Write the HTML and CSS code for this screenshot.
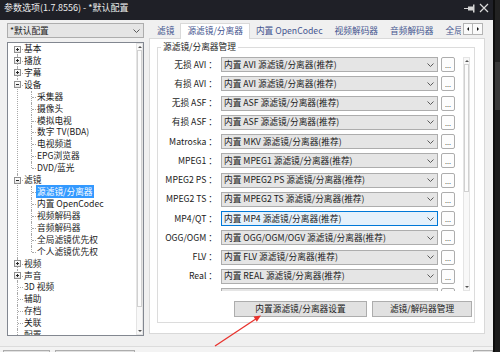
FILE: index.html
```html
<!DOCTYPE html>
<html lang="zh-CN">
<head>
    <meta charset="UTF-8">
    <title>参数选项</title>
    <link rel="stylesheet" href="styles.css">
</head>
<body>
    <div class="screen">
        <div class="window">
            <div class="titlebar">
                <span class="title">参数选项(1.7.8556) - *默认配置</span>
                <div class="title-btns">
                    <svg class="pin" width="12" height="9" viewBox="0 0 12 9"><path d="M0 4.5H4" stroke="#d4d4d4"/><rect x="4" y="2.5" width="5" height="4" fill="#d4d4d4"/><rect x="9" y="0.5" width="1.5" height="8" fill="#d4d4d4"/></svg>
                    <svg class="close" width="10" height="10" viewBox="0 0 10 10"><path d="M1 1L9 9M9 1L1 9" stroke="#dadada" stroke-width="1.2"/></svg>
                </div>
            </div>

            <div class="client">
                <div class="main">
                    <!-- left: profile + tree -->
                    <div class="sidebar">
                        <div class="combo profile">
                            <span class="value">*默认配置</span>
                            <svg class="chevron" width="7" height="4" viewBox="0 0 7 4"><path d="M0.5 0.5L3.5 3.5L6.5 0.5" fill="none" stroke="#5a5a5a"/></svg>
                        </div>
                        <div class="tree">
                            <ul class="tree-list">
                                <li><div class="node"><i class="toggle plus"></i><span class="text">基本</span></div></li>
                                <li><div class="node"><i class="toggle plus"></i><span class="text">播放</span></div></li>
                                <li><div class="node"><i class="toggle plus"></i><span class="text">字幕</span></div></li>
                                <li>
                                    <div class="node"><i class="toggle"></i><span class="text">设备</span></div>
                                    <ul class="sub">
                                        <li><div class="node"><span class="text">采集器</span></div></li>
                                        <li><div class="node"><span class="text">摄像头</span></div></li>
                                        <li><div class="node"><span class="text">模拟电视</span></div></li>
                                        <li><div class="node"><span class="text">数字 TV(BDA)</span></div></li>
                                        <li><div class="node"><span class="text">电视频道</span></div></li>
                                        <li><div class="node"><span class="text">EPG浏览器</span></div></li>
                                        <li><div class="node"><span class="text">DVD/蓝光</span></div></li>
                                    </ul>
                                </li>
                                <li>
                                    <div class="node"><i class="toggle"></i><span class="text">滤镜</span></div>
                                    <ul class="sub">
                                        <li><div class="node selected"><span class="text">源滤镜/分离器</span></div></li>
                                        <li><div class="node"><span class="text">内置 OpenCodec</span></div></li>
                                        <li><div class="node"><span class="text">视频解码器</span></div></li>
                                        <li><div class="node"><span class="text">音频解码器</span></div></li>
                                        <li><div class="node"><span class="text">全局滤镜优先权</span></div></li>
                                        <li><div class="node"><span class="text">个人滤镜优先权</span></div></li>
                                    </ul>
                                </li>
                                <li><div class="node"><i class="toggle plus"></i><span class="text">视频</span></div></li>
                                <li><div class="node"><i class="toggle plus"></i><span class="text">声音</span></div></li>
                                <li><div class="node"><span class="text">3D 视频</span></div></li>
                                <li><div class="node"><span class="text">辅助</span></div></li>
                                <li><div class="node"><span class="text">存档</span></div></li>
                                <li><div class="node"><span class="text">关联</span></div></li>
                                <li><div class="node"><span class="text">配置</span></div></li>
                            </ul>
                            <div class="vscroll">
                                <span class="arrow up"></span>
                                <span class="thumb thumb-tree"></span>
                                <span class="track"></span>
                                <span class="arrow down"></span>
                            </div>
                        </div>
                    </div>

                    <!-- right: tabs -->
                    <div class="tabs">
                        <div class="tab-strip">
                            <div class="tab-list">
                                <span class="tab">滤镜</span>
                                <span class="tab active">源滤镜/分离器</span>
                                <span class="tab">内置 OpenCodec</span>
                                <span class="tab">视频解码器</span>
                                <span class="tab">音频解码器</span>
                                <span class="tab">全局滤镜优先权</span>
                            </div>
                            <div class="tab-arrows">
                                <span class="left"></span>
                                <span class="right"></span>
                            </div>
                        </div>

                        <div class="tab-page">
                            <fieldset class="group">
                                <legend>源滤镜/分离器管理</legend>
                                <div class="scroller">
                                    <div class="rows">
                                        <div class="row">
                                            <label>无损 AVI ：</label>
                                            <div class="combo"><span class="value">内置 AVI 源滤镜/分离器(推荐)</span><svg class="chevron" width="7" height="4" viewBox="0 0 7 4"><path d="M0.5 0.5L3.5 3.5L6.5 0.5" fill="none" stroke="#5a5a5a"/></svg></div>
                                            <span class="more">...</span>
                                        </div>
                                        <div class="row">
                                            <label>有损 AVI ：</label>
                                            <div class="combo"><span class="value">内置 AVI 源滤镜/分离器(推荐)</span><svg class="chevron" width="7" height="4" viewBox="0 0 7 4"><path d="M0.5 0.5L3.5 3.5L6.5 0.5" fill="none" stroke="#5a5a5a"/></svg></div>
                                            <span class="more">...</span>
                                        </div>
                                        <div class="row">
                                            <label>无损 ASF ：</label>
                                            <div class="combo"><span class="value">内置 ASF 源滤镜/分离器(推荐)</span><svg class="chevron" width="7" height="4" viewBox="0 0 7 4"><path d="M0.5 0.5L3.5 3.5L6.5 0.5" fill="none" stroke="#5a5a5a"/></svg></div>
                                            <span class="more">...</span>
                                        </div>
                                        <div class="row">
                                            <label>有损 ASF ：</label>
                                            <div class="combo"><span class="value">内置 ASF 源滤镜/分离器(推荐)</span><svg class="chevron" width="7" height="4" viewBox="0 0 7 4"><path d="M0.5 0.5L3.5 3.5L6.5 0.5" fill="none" stroke="#5a5a5a"/></svg></div>
                                            <span class="more">...</span>
                                        </div>
                                        <div class="row">
                                            <label>Matroska ：</label>
                                            <div class="combo"><span class="value">内置 MKV 源滤镜/分离器(推荐)</span><svg class="chevron" width="7" height="4" viewBox="0 0 7 4"><path d="M0.5 0.5L3.5 3.5L6.5 0.5" fill="none" stroke="#5a5a5a"/></svg></div>
                                            <span class="more">...</span>
                                        </div>
                                        <div class="row">
                                            <label>MPEG1 ：</label>
                                            <div class="combo"><span class="value">内置 MPEG1 源滤镜/分离器(推荐)</span><svg class="chevron" width="7" height="4" viewBox="0 0 7 4"><path d="M0.5 0.5L3.5 3.5L6.5 0.5" fill="none" stroke="#5a5a5a"/></svg></div>
                                            <span class="more">...</span>
                                        </div>
                                        <div class="row">
                                            <label>MPEG2 PS ：</label>
                                            <div class="combo"><span class="value">内置 MPEG2 PS 源滤镜/分离器(推荐)</span><svg class="chevron" width="7" height="4" viewBox="0 0 7 4"><path d="M0.5 0.5L3.5 3.5L6.5 0.5" fill="none" stroke="#5a5a5a"/></svg></div>
                                            <span class="more">...</span>
                                        </div>
                                        <div class="row">
                                            <label>MPEG2 TS ：</label>
                                            <div class="combo"><span class="value">内置 MPEG2 TS 源滤镜/分离器(推荐)</span><svg class="chevron" width="7" height="4" viewBox="0 0 7 4"><path d="M0.5 0.5L3.5 3.5L6.5 0.5" fill="none" stroke="#5a5a5a"/></svg></div>
                                            <span class="more">...</span>
                                        </div>
                                        <div class="row">
                                            <label>MP4/QT ：</label>
                                            <div class="combo focus"><span class="value">内置 MP4 源滤镜/分离器(推荐)</span><svg class="chevron" width="7" height="4" viewBox="0 0 7 4"><path d="M0.5 0.5L3.5 3.5L6.5 0.5" fill="none" stroke="#5a5a5a"/></svg></div>
                                            <span class="more">...</span>
                                        </div>
                                        <div class="row">
                                            <label>OGG/OGM ：</label>
                                            <div class="combo"><span class="value">内置 OGG/OGM/OGV 源滤镜/分离器(推荐)</span><svg class="chevron" width="7" height="4" viewBox="0 0 7 4"><path d="M0.5 0.5L3.5 3.5L6.5 0.5" fill="none" stroke="#5a5a5a"/></svg></div>
                                            <span class="more">...</span>
                                        </div>
                                        <div class="row">
                                            <label>FLV ：</label>
                                            <div class="combo"><span class="value">内置 FLV 源滤镜/分离器(推荐)</span><svg class="chevron" width="7" height="4" viewBox="0 0 7 4"><path d="M0.5 0.5L3.5 3.5L6.5 0.5" fill="none" stroke="#5a5a5a"/></svg></div>
                                            <span class="more">...</span>
                                        </div>
                                        <div class="row">
                                            <label>Real ：</label>
                                            <div class="combo"><span class="value">内置 REAL 源滤镜/分离器(推荐)</span><svg class="chevron" width="7" height="4" viewBox="0 0 7 4"><path d="M0.5 0.5L3.5 3.5L6.5 0.5" fill="none" stroke="#5a5a5a"/></svg></div>
                                            <span class="more">...</span>
                                        </div>
                                        <div class="row">
                                            <label></label>
                                            <div class="combo"><span class="value"></span></div>
                                            <span class="more">...</span>
                                        </div>
                                    </div>
                                    <div class="vscroll">
                                        <span class="arrow up"></span>
                                        <span class="thumb thumb-page"></span>
                                        <span class="track"></span>
                                        <span class="arrow down"></span>
                                    </div>
                                </div>
                                <div class="actions">
                                    <button class="btn btn-setup">内置源滤镜/分离器设置</button>
                                    <button class="btn btn-manage">滤镜/解码器管理</button>
                                </div>
                            </fieldset>
                        </div>
                    </div>
                </div>

                <div class="footer">
                    <button class="btn"></button>
                    <button class="btn wide"></button>
                    <button class="btn end"></button>
                </div>
            </div>
        </div>
        <div class="edge"></div>
    </div>

    <svg class="annotation" width="500" height="352" viewBox="0 0 500 352">
        <path d="M215 346L256.5 318.5" stroke="#e8322d" stroke-width="1.3"/>
        <polygon points="261,315.5 256.8,321.8 253.5,316.6" fill="#e8322d"/>
    </svg>
</body>
</html>
```

FILE: styles.css
```css
* {
    margin: 0;
    padding: 0;
    box-sizing: border-box;
}

body {
    width: 500px;
    height: 352px;
    overflow: hidden;
    position: relative;
    background: #1d1d1f;
    font-family: "Noto Sans CJK SC", "Noto Sans", sans-serif;
    font-size: 8.7px;
    line-height: 12px;
    color: #1a1a1a;
}

.screen {
    display: flex;
    height: 352px;
}

.window {
    width: 493px;
    height: 352px;
    display: flex;
    flex-direction: column;
    background: #f0f0f0;
    overflow: hidden;
}

.edge {
    flex: 1;
    border-left: 2px solid #0e0e0e;
    background: linear-gradient(#222 0, #222 62px, #3a3a3a 62px, #3a3a3a 110px, #1c1c1c 110px);
}

/* title bar */
.titlebar {
    height: 20px;
    flex: none;
    display: flex;
    align-items: center;
    padding: 0 4px 4px 4px;
    background: #1f2027;
    color: #eee;
    font-size: 9px;
}

.titlebar .title {
    flex: 1;
    white-space: nowrap;
}

.title-btns {
    display: flex;
    align-items: center;
    gap: 3px;
}

.client {
    flex: 1;
    min-height: 0;
    display: flex;
    flex-direction: column;
}

.main {
    height: 326px;
    flex: none;
    display: flex;
    padding: 3px 0 0 7px;
}

/* left column */
.sidebar {
    width: 137px;
    display: flex;
    flex-direction: column;
    gap: 4px;
}

.combo {
    height: 15px;
    display: flex;
    align-items: center;
    padding: 0 3px 0 2px;
    border: 1px solid #adadad;
    background: #e5e5e5;
    white-space: nowrap;
    overflow: hidden;
}

.combo .value {
    flex: 1;
    overflow: hidden;
}

.combo.focus {
    border-color: #0078d7;
    background: #e5f1fb;
}

.chevron {
    flex: none;
}

.tree {
    height: 294px;
    display: flex;
    border: 1px solid #828790;
    background: #fff;
    overflow: hidden;
}

.tree-list,
.tree-list ul {
    list-style: none;
}

.tree-list {
    flex: 1;
    overflow: hidden;
}

.tree-list li {
    position: relative;
}

.tree-list > li::before {
    content: "";
    position: absolute;
    left: 9px;
    top: 0;
    bottom: 0;
    border-left: 1px dotted #a8a8a8;
}

.tree-list > li:first-child::before {
    top: 6px;
}

.sub > li::before {
    content: "";
    position: absolute;
    left: 23px;
    top: 0;
    bottom: 0;
    border-left: 1px dotted #a8a8a8;
}

.sub > li:last-child::before {
    bottom: auto;
    height: 6px;
}

.node {
    position: relative;
    height: 11.93px;
    line-height: 11.93px;
    padding-left: 15px;
    white-space: nowrap;
}

.node::before {
    content: "";
    position: absolute;
    left: 10px;
    top: 6px;
    width: 5px;
    border-top: 1px dotted #a8a8a8;
}

.sub .node {
    padding-left: 28px;
}

.sub .node::before {
    left: 24px;
    width: 4px;
}

.node .text {
    padding: 0 1px;
}

.node.selected .text {
    background: #3399ff;
    color: #fff;
}

.toggle {
    position: absolute;
    left: 6px;
    top: 2.5px;
    width: 7px;
    height: 7px;
    z-index: 1;
    border: 1px solid #919191;
    background: linear-gradient(#fff, #e4e4e4);
}

.toggle::before {
    content: "";
    position: absolute;
    left: 1px;
    top: 2px;
    width: 3px;
    height: 1px;
    background: #2a2a2a;
}

.toggle.plus::after {
    content: "";
    position: absolute;
    left: 2px;
    top: 1px;
    width: 1px;
    height: 3px;
    background: #2a2a2a;
}

/* scrollbars */
.vscroll {
    flex: none;
    width: 7px;
    display: flex;
    flex-direction: column;
    background: #f8f8f8;
    border: 1px solid #e4e4e4;
}

.vscroll .arrow {
    height: 6px;
    flex: none;
    display: flex;
    align-items: center;
    justify-content: center;
}

.vscroll .arrow::before {
    content: "";
    border-left: 2px solid transparent;
    border-right: 2px solid transparent;
}

.vscroll .arrow.up::before {
    border-bottom: 2px solid #555;
}

.vscroll .arrow.down::before {
    border-top: 2px solid #555;
}

.vscroll .thumb {
    flex: none;
    border: 1px solid #d0d0d0;
    background: #fcfcfc;
}

.thumb-tree {
    height: 257px;
}

.thumb-page {
    height: 128px;
}

.vscroll .track {
    flex: 1;
}

/* tabs */
.tabs {
    width: 336px;
    margin-left: 5px;
    display: flex;
    flex-direction: column;
}

.tab-strip {
    height: 16px;
    margin-bottom: -1px;
    display: flex;
    position: relative;
    z-index: 1;
}

.tab-list {
    flex: 1;
    min-width: 0;
    margin-right: 2px;
    padding-left: 2px;
    display: flex;
    align-items: flex-end;
    overflow: hidden;
    white-space: nowrap;
}

.tab {
    flex: none;
    height: 14px;
    line-height: 12px;
    padding: 0 6px 2px;
    color: #44558f;
}

.tab.active {
    height: 16px;
    line-height: 14px;
    background: #fff;
    border: 1px solid #d9d9d9;
    border-bottom: none;
}

.tab-arrows {
    flex: none;
    display: flex;
    height: 12px;
    margin-right: 2px;
}

.tab-arrows span {
    width: 10px;
    height: 12px;
    display: flex;
    align-items: center;
    justify-content: center;
    border: 1px solid #b4b4b4;
    background: #fafafa;
}

.tab-arrows span + span {
    border-left: none;
}

.tab-arrows span::before {
    content: "";
    border-top: 2px solid transparent;
    border-bottom: 2px solid transparent;
}

.tab-arrows .left::before {
    border-right: 2px solid #111;
}

.tab-arrows .right::before {
    border-left: 2px solid #111;
}

.tab-page {
    height: 296px;
    padding: 2px 9px 0 7px;
    background: #fff;
    border: 1px solid #d9d9d9;
}

.group {
    min-width: 0;
    padding: 4px 4px 5px 0;
    border: 1px solid #dcdcdc;
}

.group legend {
    margin-left: 3px;
    padding: 0 2px;
    line-height: 12px;
}

.scroller {
    display: flex;
    height: 234px;
}

.rows {
    flex: 1;
    display: flex;
    flex-direction: column;
    gap: 4.25px;
    overflow: hidden;
}

.row {
    flex: none;
    height: 15px;
    display: flex;
    align-items: center;
}

.row label {
    flex: none;
    width: 59px;
    margin-right: 4px;
    text-align: right;
    white-space: nowrap;
}

.row .combo {
    flex: none;
    width: 217px;
}

.more {
    flex: none;
    width: 14px;
    height: 15px;
    margin-left: 3px;
    border: 1px solid #adadad;
    border-radius: 2px;
    background: #fdfdfd;
    color: #444;
    font-size: 7px;
    line-height: 14px;
    text-align: center;
}

.scroller .vscroll {
    margin-left: 8px;
}

.actions {
    display: flex;
    justify-content: flex-end;
    gap: 5px;
    margin: 10px -2px 0 0;
}

.btn {
    height: 16px;
    border: 1px solid #adadad;
    background: #e1e1e1;
    font: inherit;
    line-height: 14px;
    color: #1a1a1a;
}

.btn-setup {
    width: 133px;
}

.btn-manage {
    width: 100px;
}

/* bottom button row (cut off) */
.footer {
    flex: 1;
    display: flex;
    gap: 5px;
    padding: 3px 0 0 3px;
    border-top: 1px solid #dcdcdc;
    background: #f3f3f3;
}

.footer .btn {
    width: 47px;
    height: 20px;
    flex: none;
}

.footer .btn.wide {
    width: 80px;
}

.footer .btn.end {
    width: 20px;
    margin-left: auto;
}

.annotation {
    position: absolute;
    left: 0;
    top: 0;
    pointer-events: none;
}
```
